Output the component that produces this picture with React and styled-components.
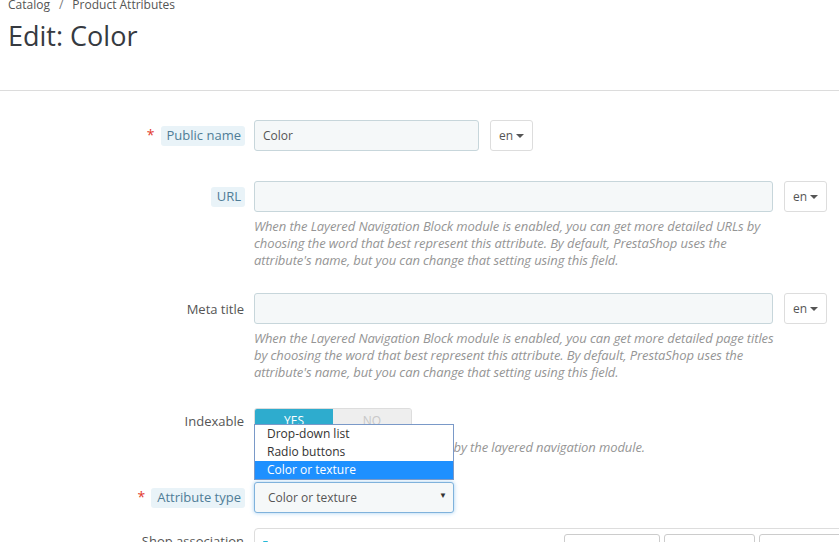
import React from "react";
import styled, { createGlobalStyle } from "styled-components";

const GlobalStyle = createGlobalStyle`
   html, body {
      margin: 0;
      padding: 0;
      background: #ffffff;
      height: 542px;
      overflow: hidden;
   }
   body {
      font-family: "Open Sans", "Noto Sans", sans-serif;
      color: #555555;
      font-size: 12px;
   }
   * {
      box-sizing: border-box;
   }
`;

const HELP_URL =
   "When the Layered Navigation Block module is enabled, you can get more detailed URLs by choosing the word that best represent this attribute. By default, PrestaShop uses the attribute's name, but you can change that setting using this field.";
const HELP_META =
   "When the Layered Navigation Block module is enabled, you can get more detailed page titles by choosing the word that best represent this attribute. By default, PrestaShop uses the attribute's name, but you can change that setting using this field.";

function App() {
   return (
      <>
         <GlobalStyle />
         <Page>
            <PageHead>
               <Breadcrumb>
                  <span>Catalog</span>
                  <Sep>/</Sep>
                  <span>Product Attributes</span>
               </Breadcrumb>
               <Title>Edit: Color</Title>
            </PageHead>

            <Form>
               <FormGroup $space={30}>
                  <Label>
                     <Required>*</Required>
                     <Hint>Public name</Hint>
                  </Label>
                  <Controls>
                     <InputRow>
                        <Input $width={225} defaultValue="Color" />
                        <LangButton>
                           en <Caret />
                        </LangButton>
                     </InputRow>
                  </Controls>
               </FormGroup>

               <FormGroup $space={24}>
                  <Label>
                     <Hint>URL</Hint>
                  </Label>
                  <Controls>
                     <InputRow>
                        <Input $width={519} />
                        <LangButton>
                           en <Caret />
                        </LangButton>
                     </InputRow>
                     <Help>{HELP_URL}</Help>
                  </Controls>
               </FormGroup>

               <FormGroup $space={27}>
                  <Label>Meta title</Label>
                  <Controls>
                     <InputRow>
                        <Input $width={519} />
                        <LangButton>
                           en <Caret />
                        </LangButton>
                     </InputRow>
                     <Help>{HELP_META}</Help>
                  </Controls>
               </FormGroup>

               <FormGroup $space={26}>
                  <Label $tall={25}>Indexable</Label>
                  <Controls>
                     <Switch>
                        <SwitchOption $active>YES</SwitchOption>
                        <SwitchOption>NO</SwitchOption>
                     </Switch>
                     <Help $top={6}>
                        Use this attribute in URL generated by the layered navigation module.
                     </Help>
                  </Controls>
               </FormGroup>

               <FormGroup $space={15}>
                  <Label>
                     <Required>*</Required>
                     <Hint>Attribute type</Hint>
                  </Label>
                  <Controls>
                     <SelectWrap>
                        <OptionList>
                           <OptionItem>Drop-down list</OptionItem>
                           <OptionItem>Radio buttons</OptionItem>
                           <OptionItem $selected>Color or texture</OptionItem>
                        </OptionList>
                        <Select>
                           <span>Color or texture</span>
                           <SelectArrow>▼</SelectArrow>
                        </Select>
                     </SelectWrap>
                  </Controls>
               </FormGroup>

               <FormGroup $space={0}>
                  <Label $tall={26}>Shop association</Label>
                  <Controls>
                     <TreeBox>
                        <TreeToolbar>
                           <TreeCheck />
                           <TreeButtons>
                              <TreeButton $width={96} />
                              <TreeButton $width={91} />
                              <TreeButton $width={91} />
                           </TreeButtons>
                        </TreeToolbar>
                     </TreeBox>
                  </Controls>
               </FormGroup>
            </Form>
         </Page>
      </>
   );
}

export default App;

const Page = styled.div`
   width: 839px;
   overflow: hidden;
`;

const PageHead = styled.div`
   display: flex;
   flex-direction: column;
   padding: 0 8px;
   height: 91px;
   border-bottom: 1px solid #dcdcdc;
`;

const Breadcrumb = styled.div`
   margin-top: -4px;
   font-size: 12px;
   line-height: 17px;
   color: #555555;
`;

const Sep = styled.span`
   margin: 0 9px;
   color: #777777;
`;

const Title = styled.h1`
   margin: 7px 0 0;
   font-size: 27px;
   font-weight: 400;
   line-height: 31px;
   color: #363a41;
`;

const Form = styled.div`
   padding-top: 29px;
`;

const FormGroup = styled.div`
   display: grid;
   grid-template-columns: 244px 1fr;
   column-gap: 10px;
   margin-bottom: ${(p) => p.$space}px;
`;

const Label = styled.div`
   display: flex;
   align-items: center;
   justify-content: flex-end;
   height: ${(p) => p.$tall || 31}px;
   font-size: 13px;
   color: #555555;
   white-space: nowrap;
`;

const Required = styled.span`
   color: #e23a2c;
   font-size: 14px;
   margin-right: 6px;
   margin-top: -2px;
`;

const Hint = styled.span`
   background: #e9f3f8;
   color: #4f7d97;
   border-radius: 3px;
   padding: 1px 4px 2px 6px;
   line-height: 17px;
   margin-right: -1px;
`;

const Controls = styled.div`
   min-width: 0;
   display: flex;
   flex-direction: column;
`;

const InputRow = styled.div`
   display: flex;
   align-items: center;
`;

const Input = styled.input`
   width: ${(p) => p.$width}px;
   height: 31px;
   padding: 0 8px;
   border: 1px solid #c7d6db;
   border-radius: 3px;
   background: #f5f8f9;
   font-family: "Open Sans", sans-serif;
   font-size: 12px;
   color: #555555;
   outline: none;
`;

const LangButton = styled.div`
   margin-left: 11px;
   width: 43px;
   height: 31px;
   border: 1px solid #dddddd;
   border-radius: 3px;
   background: #ffffff;
   display: flex;
   align-items: center;
   justify-content: center;
   gap: 3px;
   font-size: 12px;
   color: #555555;
`;

const Caret = styled.span`
   display: inline-block;
   width: 0;
   height: 0;
   border-left: 4px solid transparent;
   border-right: 4px solid transparent;
   border-top: 4px solid #555555;
   margin-top: 1px;
`;

const Help = styled.p`
   margin: ${(p) => p.$top ?? 6}px 0 0;
   width: 528px;
   font-size: 13px;
   line-height: 17px;
   font-style: italic;
   color: #959595;
   letter-spacing: -0.1px;
`;

const Switch = styled.div`
   display: flex;
   width: 158px;
   height: 25px;
   border-radius: 3px;
   overflow: hidden;
   background: #eeeeee;
   border: 1px solid #dddddd;
`;

const SwitchOption = styled.div`
   flex: 1;
   display: flex;
   align-items: center;
   justify-content: center;
   font-size: 12px;
   text-transform: uppercase;
   background: ${(p) => (p.$active ? "#2eacce" : "#eeeeee")};
   color: ${(p) => (p.$active ? "#ffffff" : "#c8c8c8")};
`;

const SelectWrap = styled.div`
   position: relative;
   width: 200px;
`;

const OptionList = styled.div`
   position: absolute;
   left: 0;
   bottom: calc(100% + 2px);
   width: 200px;
   background: #ffffff;
   border: 1px solid #7a99c8;
   z-index: 2;
`;

const OptionItem = styled.div`
   height: 18px;
   line-height: 17px;
   padding-left: 12px;
   font-size: 12px;
   color: ${(p) => (p.$selected ? "#ffffff" : "#333333")};
   background: ${(p) => (p.$selected ? "#1e90ff" : "transparent")};
`;

const Select = styled.div`
   height: 31px;
   display: flex;
   align-items: center;
   justify-content: space-between;
   padding: 0 6px 0 13px;
   border: 1px solid #7fb2dc;
   border-radius: 3px;
   background: #f5f8f9;
   box-shadow: 0 0 4px rgba(102, 175, 233, 0.6);
   font-size: 12px;
   color: #555555;
`;

const SelectArrow = styled.span`
   font-size: 8px;
   color: #333333;
   margin-top: -6px;
`;

const TreeBox = styled.div`
   width: 650px;
   height: 60px;
   border: 1px solid #dddddd;
   border-radius: 4px;
   padding: 5px 0 0 8px;
`;

const TreeToolbar = styled.div`
   display: flex;
   align-items: flex-start;
   justify-content: space-between;
`;

const TreeCheck = styled.span`
   display: block;
   width: 5px;
   height: 6px;
   margin-top: 7px;
   background: #25b9d7;
   border-radius: 1px;
`;

const TreeButtons = styled.div`
   display: flex;
   gap: 4px;
   margin-right: 53px;
`;

const TreeButton = styled.div`
   width: ${(p) => p.$width}px;
   height: 30px;
   border: 1px solid #cccccc;
   border-radius: 3px;
   background: #ffffff;
`;
